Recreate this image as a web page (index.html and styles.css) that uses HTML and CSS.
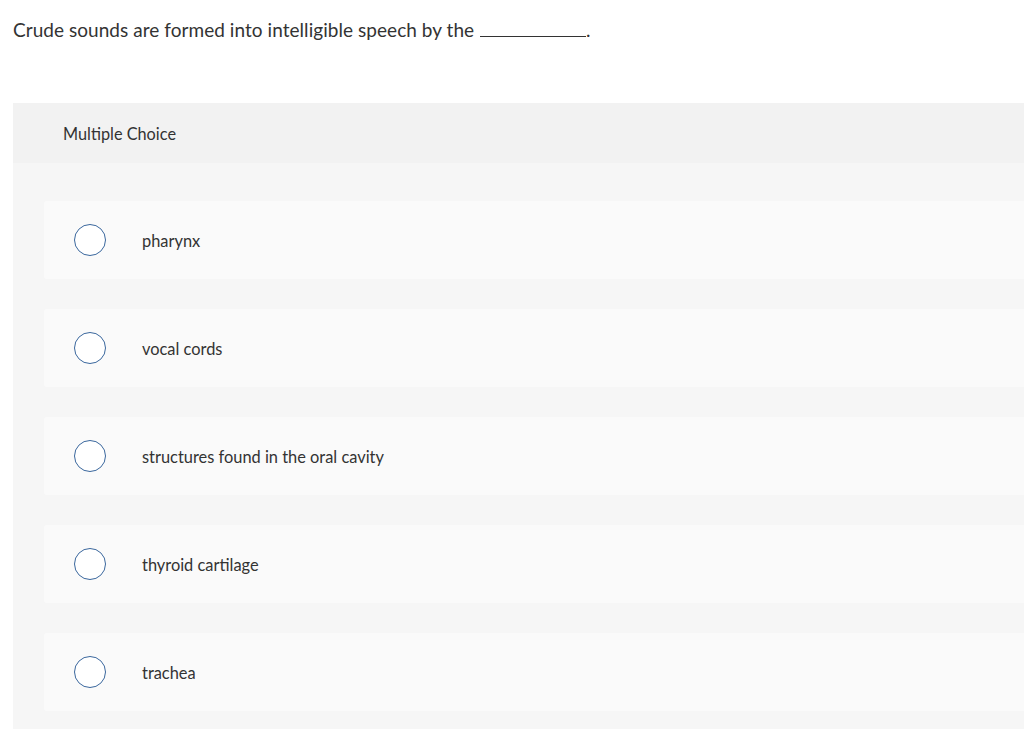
FILE: index.html
```html
<!DOCTYPE html>
<html lang="en">
<head>
<meta charset="utf-8">
<title>Multiple Choice</title>
<link rel="stylesheet" href="styles.css">
</head>
<body>
  <div class="page">
    <p class="question">Crude sounds are formed into intelligible speech by the <span class="blank"></span>.</p>
    <section class="panel">
      <div class="panel-header">Multiple Choice</div>
      <div class="panel-body">
        <label class="option"><span class="radio"></span><span class="label">pharynx</span></label>
        <label class="option"><span class="radio"></span><span class="label">vocal cords</span></label>
        <label class="option"><span class="radio"></span><span class="label">structures found in the oral cavity</span></label>
        <label class="option"><span class="radio"></span><span class="label">thyroid cartilage</span></label>
        <label class="option"><span class="radio"></span><span class="label">trachea</span></label>
      </div>
    </section>
  </div>
</body>
</html>
```

FILE: styles.css
```css
html, body {
  margin: 0;
  padding: 0;
  background: #ffffff;
}
body {
  font-family: Lato, "Open Sans", "Liberation Sans", sans-serif;
  color: #333333;
}
.page {
  padding: 18px 0 0 13px;
}
.question {
  margin: 0;
  font-size: 19px;
  line-height: 24px;
  letter-spacing: 0.05px;
  color: #333333;
}
.blank {
  display: inline-block;
  width: 106px;
  border-bottom: 1px solid #333333;
  margin-left: 1px;
  vertical-align: baseline;
}
.panel {
  margin-top: 61px;
}
.panel-header {
  height: 60px;
  display: flex;
  align-items: center;
  padding-left: 50px;
  background: #f2f2f2;
  font-size: 16.3px;
  color: #333333;
}
.panel-body {
  background: #f6f6f6;
  padding: 38px 0 18px 31px;
  display: flex;
  flex-direction: column;
  gap: 30px;
}
.option {
  height: 78px;
  background: #fafafa;
  border-radius: 3px 0 0 3px;
  display: flex;
  align-items: center;
  padding-left: 30px;
}
.radio {
  width: 30px;
  height: 30px;
  border: 1.5px solid #3a679d;
  border-radius: 50%;
  background: #ffffff;
  flex: none;
}
.label {
  margin-left: 36px;
  font-size: 16.4px;
  color: #333333;
}
```
